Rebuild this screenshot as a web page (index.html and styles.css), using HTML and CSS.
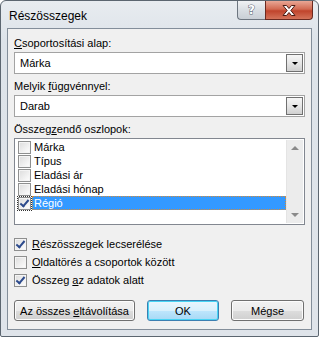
FILE: index.html
```html
<!DOCTYPE html>
<html lang="hu">
<head>
    <meta charset="UTF-8">
    <title>Részösszegek</title>
    <link rel="stylesheet" href="styles.css">
</head>
<body>
    <div class="window">
        <div class="titlebar">
            <span class="title">Részösszegek</span>
            <div class="caption-buttons">
                <span class="cap-btn help">?</span>
                <span class="cap-btn close">
                    <svg width="14" height="11" viewBox="0 0 14 11">
                        <path d="M1 0.5h3.5l2.5 3 2.5-3h3.5l-4.2 5 4.2 5h-3.5l-2.5-3-2.5 3h-3.5l4.2-5z" fill="#fff" stroke="#4a1c14" stroke-width="1"/>
                    </svg>
                </span>
            </div>
        </div>

        <div class="client">
            <div class="field-label"><u>C</u>soportosítási alap:</div>
            <div class="combo">
                <span class="combo-value">Márka</span>
                <span class="combo-btn"><span class="arrow"></span></span>
            </div>

            <div class="field-label">Melyik <u>f</u>üggvénnyel:</div>
            <div class="combo">
                <span class="combo-value">Darab</span>
                <span class="combo-btn"><span class="arrow"></span></span>
            </div>

            <div class="field-label">Összeg<u>z</u>endő oszlopok:</div>
            <div class="listbox">
                <div class="list-items">
                    <div class="list-row"><span class="check"></span><span class="row-text">Márka</span></div>
                    <div class="list-row"><span class="check"></span><span class="row-text">Típus</span></div>
                    <div class="list-row"><span class="check"></span><span class="row-text">Eladási ár</span></div>
                    <div class="list-row"><span class="check"></span><span class="row-text">Eladási hónap</span></div>
                    <div class="list-row selected"><span class="check checked focus"></span><span class="row-text">Régió</span></div>
                </div>
                <div class="scrollbar">
                    <span class="sb-arrow up"></span>
                    <span class="sb-arrow down"></span>
                </div>
            </div>

            <div class="options">
                <div class="option"><span class="check checked"></span><span><u>R</u>észösszegek lecserélése</span></div>
                <div class="option"><span class="check"></span><span><u>O</u>ldaltörés a csoportok között</span></div>
                <div class="option"><span class="check checked"></span><span>Összeg <u>a</u>z adatok alatt</span></div>
            </div>

            <div class="buttons">
                <span class="button wide"><span>Az összes <u>e</u>ltávolítása</span></span>
                <span class="button default"><span>OK</span></span>
                <span class="button"><span>Mégse</span></span>
            </div>
        </div>
    </div>
</body>
</html>
```

FILE: styles.css
```css
* {
    margin: 0;
    padding: 0;
    box-sizing: border-box;
}

body {
    background: #ffffff;
    font-family: "Liberation Sans", Arial, sans-serif;
    font-size: 11px;
    color: #000;
}

u {
    text-decoration: underline;
    text-underline-offset: 1px;
}

/* window frame */
.window {
    width: 319px;
    height: 337px;
    border: 1px solid #5c6670;
    border-radius: 6px 6px 2px 2px;
    background: linear-gradient(#e8ecf0, #dde3e9 40px, #dfe4ea);
    padding: 0 6px 6px 6px;
    display: flex;
    flex-direction: column;
}

.titlebar {
    height: 27px;
    display: flex;
    justify-content: space-between;
    align-items: flex-start;
}

.title {
    font-family: "Liberation Sans", Arial, sans-serif;
    font-size: 12px;
    padding: 8px 0 0 2px;
}

.caption-buttons {
    display: flex;
    margin-right: -1px;
}

.cap-btn {
    height: 19px;
    display: flex;
    align-items: center;
    justify-content: center;
    border: 1px solid #6d7680;
    border-top: none;
}

.help {
    width: 28px;
    border-radius: 0 0 0 4px;
    border-right: none;
    background: linear-gradient(#f0f2f4, #d9dee3 50%, #c9cfd6);
    font-family: "DejaVu Sans", sans-serif;
    font-size: 12px;
    font-weight: bold;
    color: #fff;
    -webkit-text-stroke: 1px #5a6470;
    paint-order: stroke fill;
}

.close {
    width: 48px;
    border-radius: 0 0 4px 0;
    border-color: #6b2a20;
    background: linear-gradient(#e9a795, #d26a52 45%, #c0442c 55%, #d4735a);
}

/* client area */
.client {
    flex: 1;
    background: #f0f0f0;
    border: 1px solid #838e9a;
    padding: 8px 6px 0 6px;
}

.field-label {
    height: 15px;
    line-height: 13px;
}

.combo {
    height: 22px;
    border: 1px solid #a3a3a3;
    background: #fff;
    display: flex;
    align-items: center;
    margin-bottom: 6px;
    padding: 1px;
}

.combo-value {
    flex: 1;
    padding-left: 4px;
}

.combo-btn {
    width: 17px;
    height: 100%;
    border: 1px solid #707070;
    background: linear-gradient(#f6f6f6, #e6e6e6 50%, #d0d0d0);
    display: flex;
    align-items: center;
    justify-content: center;
}

.arrow {
    width: 0;
    height: 0;
    border-left: 3px solid transparent;
    border-right: 3px solid transparent;
    border-top: 3px solid #000;
}

/* list of columns */
.listbox {
    height: 87px;
    border: 1px solid #828790;
    background: #fff;
    display: flex;
    padding: 1px;
}

.list-items {
    flex: 1;
}

.list-row {
    height: 14px;
    display: flex;
    align-items: center;
    padding-left: 2px;
}

.row-text {
    height: 14px;
    line-height: 14px;
    padding: 0 2px;
    margin-left: 1px;
}

.list-row.selected .row-text {
    flex: 1;
    background: #3399ff;
    color: #fff;
    outline: 1px dotted #d28a3a;
    outline-offset: -1px;
}

.check {
    width: 13px;
    height: 13px;
    border: 1px solid #8e8f8f;
    background: linear-gradient(135deg, #dcdcdc, #f4f4f4 70%, #fff);
    box-shadow: inset 0 0 0 1px #f4f4f4;
    display: inline-block;
    flex: none;
    position: relative;
}

.check.checked::after {
    content: "";
    position: absolute;
    left: 3px;
    top: 0px;
    width: 3px;
    height: 7px;
    border: solid #2c4a8c;
    border-width: 0 2px 2px 0;
    transform: rotate(40deg);
}

.check.focus {
    outline: 1px dotted #333;
}

.scrollbar {
    width: 17px;
    background: #ececec;
    border-left: 1px solid #e4e4e4;
    display: flex;
    flex-direction: column;
    justify-content: space-between;
    align-items: center;
    padding: 6px 0;
}

.sb-arrow {
    width: 0;
    height: 0;
    border-left: 4px solid transparent;
    border-right: 4px solid transparent;
}

.sb-arrow.up {
    border-bottom: 4px solid #8a8a8a;
}

.sb-arrow.down {
    border-top: 4px solid #8a8a8a;
}

/* option checkboxes */
.options {
    margin-top: 12px;
    display: flex;
    flex-direction: column;
    gap: 4px;
}

.option {
    height: 14px;
    display: flex;
    align-items: center;
    gap: 5px;
}

/* bottom buttons */
.buttons {
    margin-top: 13px;
    display: flex;
    gap: 12px;
}

.button {
    height: 21px;
    width: 73px;
    border: 1px solid #707070;
    border-radius: 3px;
    background: linear-gradient(#f2f2f2, #ebebeb 50%, #dddddd 51%, #cfcfcf);
    box-shadow: inset 0 0 0 1px #fcfcfc;
    display: flex;
    align-items: center;
    justify-content: center;
}

.button.wide {
    width: 121px;
}

.button.default {
    width: 72px;
    border-color: #3c7fb1;
    box-shadow: inset 0 0 0 1px #48d4f4;
    background: linear-gradient(#eaf6fd, #d9f0fc 50%, #bee6fd 51%, #a7d9f5);
}
```
